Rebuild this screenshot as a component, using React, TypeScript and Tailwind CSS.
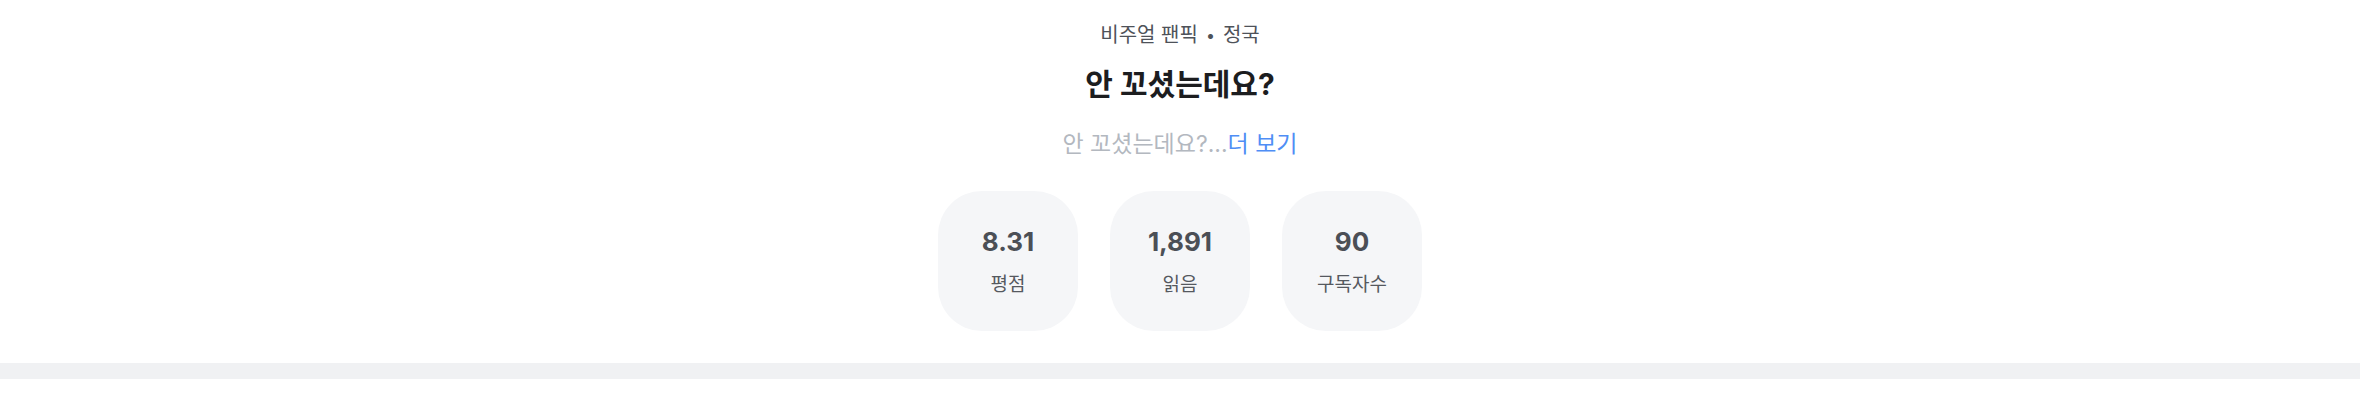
const stats = [
  { value: "8.31", label: "평점" },
  { value: "1,891", label: "읽음" },
  { value: "90", label: "구독자수" },
];

const kr = "font-['Inter','Noto_Sans_CJK_KR',sans-serif]";

export default function App() {
  return (
    <div className={`h-[405px] w-full overflow-hidden bg-white ${kr}`}>
      <section className="flex flex-col items-center pt-[21px]">
        <p className="flex h-[28px] items-center text-[20px] text-[#4e5259]">
          비주얼 팬픽<span className="mx-[8px] text-[16px]">•</span>정국
        </p>
        <h1 className="mt-[16px] flex h-[38px] items-center text-[30px] font-bold text-[#1c1d1f]">
          안 꼬셨는데요?
        </h1>
        <p className="mt-[26px] flex h-[30px] items-center text-[23px] text-[#b3b8bf]">
          안 꼬셨는데요?...<span className="text-[#4f8ef5]">더 보기</span>
        </p>
        <div className="mt-[32px] flex gap-8">
          {stats.map((s) => (
            <div
              key={s.label}
              className="flex h-[140px] w-[140px] flex-col items-center justify-center rounded-[44px] bg-[#f5f6f8]"
            >
              <span className="h-[32px] text-[26px] leading-[32px] font-bold text-[#4b4f56]">{s.value}</span>
              <span className="mt-[15px] h-[24px] text-[19px] leading-[24px] text-[#55595f]">{s.label}</span>
            </div>
          ))}
        </div>
      </section>
      <div className="mt-[32px] h-4 w-full bg-[#f0f1f3]" />
    </div>
  );
}
